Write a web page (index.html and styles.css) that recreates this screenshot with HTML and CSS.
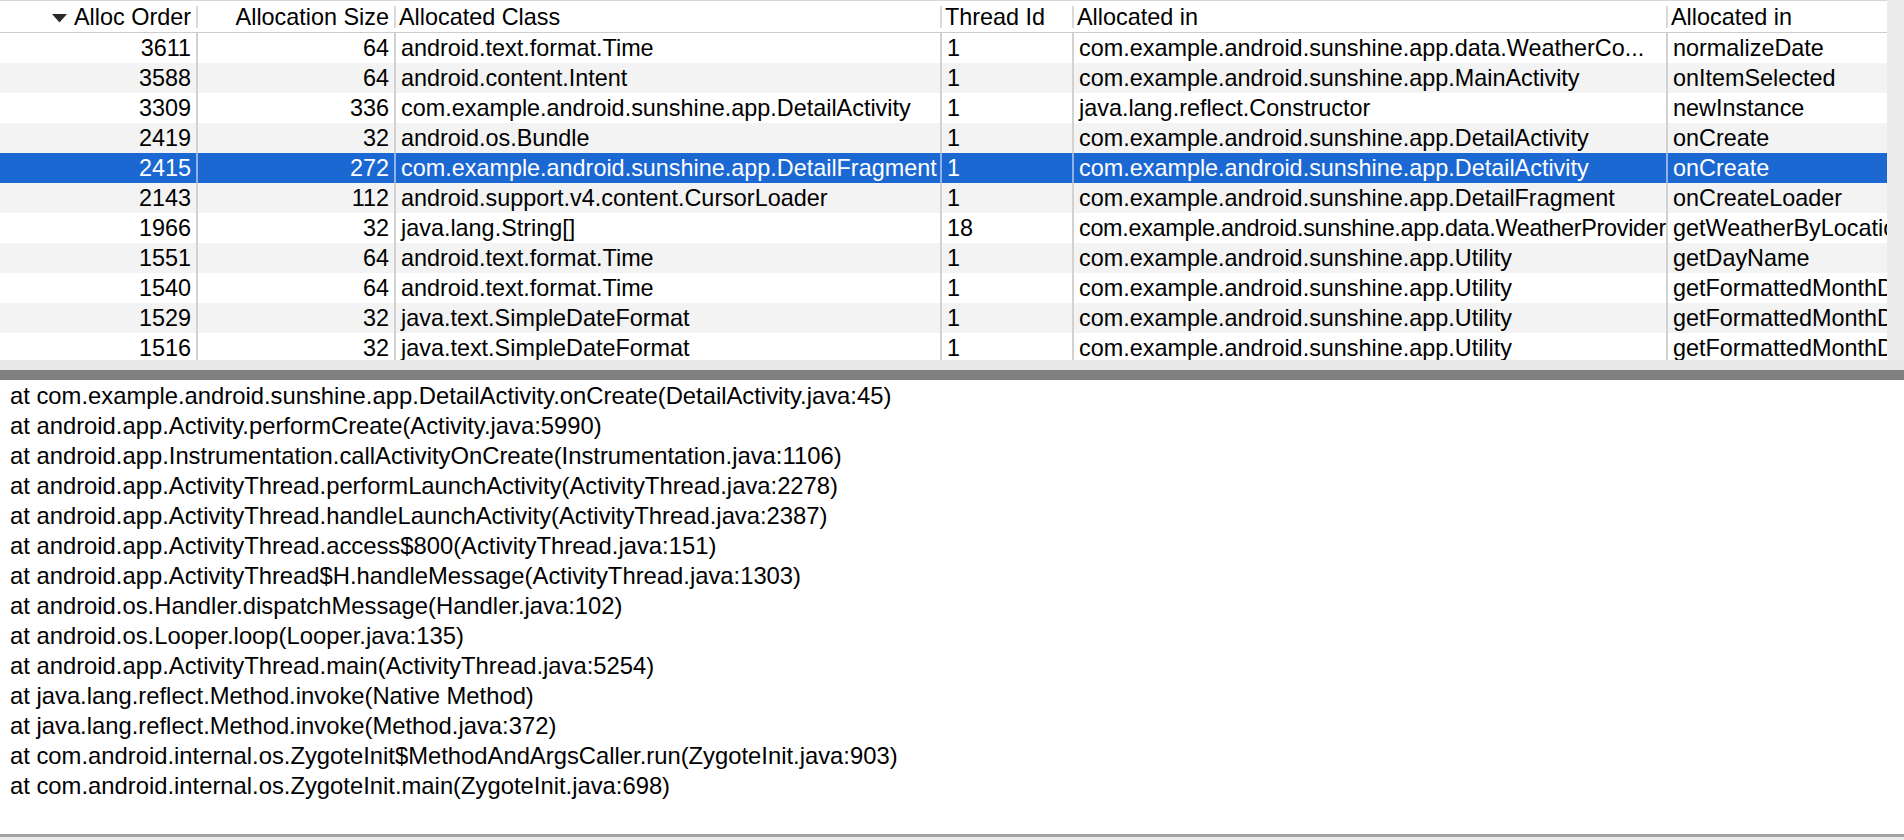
FILE: index.html
```html
<!DOCTYPE html>
<html>
<head>
<meta charset="utf-8">
<title>Allocation Tracker</title>
<link rel="stylesheet" href="styles.css">
</head>
<body>
<div class="app">
  <div class="table-pane">
    <div class="table">
      <div class="hrow">
        <div class="hcell num first"><svg class="sort" width="15" height="9" viewBox="0 0 15 9"><polygon points="0,0 15,0 7.5,8.5" fill="#2a2a2a"/></svg>Alloc Order</div>
        <div class="hcell num">Allocation Size</div>
        <div class="hcell">Allocated Class</div>
        <div class="hcell">Thread Id</div>
        <div class="hcell">Allocated in</div>
        <div class="hcell">Allocated in</div>
      </div>
      <div class="tbody">
        <div class="row"><div class="cell num first">3611</div><div class="cell num">64</div><div class="cell">android.text.format.Time</div><div class="cell">1</div><div class="cell">com.example.android.sunshine.app.data.WeatherCo...</div><div class="cell">normalizeDate</div></div>
        <div class="row alt"><div class="cell num first">3588</div><div class="cell num">64</div><div class="cell">android.content.Intent</div><div class="cell">1</div><div class="cell">com.example.android.sunshine.app.MainActivity</div><div class="cell">onItemSelected</div></div>
        <div class="row"><div class="cell num first">3309</div><div class="cell num">336</div><div class="cell">com.example.android.sunshine.app.DetailActivity</div><div class="cell">1</div><div class="cell">java.lang.reflect.Constructor</div><div class="cell">newInstance</div></div>
        <div class="row alt"><div class="cell num first">2419</div><div class="cell num">32</div><div class="cell">android.os.Bundle</div><div class="cell">1</div><div class="cell">com.example.android.sunshine.app.DetailActivity</div><div class="cell">onCreate</div></div>
        <div class="row selected"><div class="cell num first">2415</div><div class="cell num">272</div><div class="cell">com.example.android.sunshine.app.DetailFragment</div><div class="cell">1</div><div class="cell">com.example.android.sunshine.app.DetailActivity</div><div class="cell">onCreate</div></div>
        <div class="row alt"><div class="cell num first">2143</div><div class="cell num">112</div><div class="cell">android.support.v4.content.CursorLoader</div><div class="cell">1</div><div class="cell">com.example.android.sunshine.app.DetailFragment</div><div class="cell">onCreateLoader</div></div>
        <div class="row"><div class="cell num first">1966</div><div class="cell num">32</div><div class="cell">java.lang.String[]</div><div class="cell">18</div><div class="cell tight">com.example.android.sunshine.app.data.WeatherProvider</div><div class="cell">getWeatherByLocationSettingAndDate</div></div>
        <div class="row alt"><div class="cell num first">1551</div><div class="cell num">64</div><div class="cell">android.text.format.Time</div><div class="cell">1</div><div class="cell">com.example.android.sunshine.app.Utility</div><div class="cell">getDayName</div></div>
        <div class="row"><div class="cell num first">1540</div><div class="cell num">64</div><div class="cell">android.text.format.Time</div><div class="cell">1</div><div class="cell">com.example.android.sunshine.app.Utility</div><div class="cell">getFormattedMonthDay</div></div>
        <div class="row alt"><div class="cell num first">1529</div><div class="cell num">32</div><div class="cell">java.text.SimpleDateFormat</div><div class="cell">1</div><div class="cell">com.example.android.sunshine.app.Utility</div><div class="cell">getFormattedMonthDay</div></div>
        <div class="row"><div class="cell num first">1516</div><div class="cell num">32</div><div class="cell">java.text.SimpleDateFormat</div><div class="cell">1</div><div class="cell">com.example.android.sunshine.app.Utility</div><div class="cell">getFormattedMonthDay</div></div>
      </div>
    </div>
    <div class="gutter"></div>
  </div>
  <div class="splitter">
    <div class="split-light"></div>
    <div class="split-dark"></div>
  </div>
  <div class="trace">
    <div class="line">at com.example.android.sunshine.app.DetailActivity.onCreate(DetailActivity.java:45)</div>
    <div class="line">at android.app.Activity.performCreate(Activity.java:5990)</div>
    <div class="line">at android.app.Instrumentation.callActivityOnCreate(Instrumentation.java:1106)</div>
    <div class="line">at android.app.ActivityThread.performLaunchActivity(ActivityThread.java:2278)</div>
    <div class="line">at android.app.ActivityThread.handleLaunchActivity(ActivityThread.java:2387)</div>
    <div class="line">at android.app.ActivityThread.access$800(ActivityThread.java:151)</div>
    <div class="line">at android.app.ActivityThread$H.handleMessage(ActivityThread.java:1303)</div>
    <div class="line">at android.os.Handler.dispatchMessage(Handler.java:102)</div>
    <div class="line">at android.os.Looper.loop(Looper.java:135)</div>
    <div class="line">at android.app.ActivityThread.main(ActivityThread.java:5254)</div>
    <div class="line">at java.lang.reflect.Method.invoke(Native Method)</div>
    <div class="line">at java.lang.reflect.Method.invoke(Method.java:372)</div>
    <div class="line">at com.android.internal.os.ZygoteInit$MethodAndArgsCaller.run(ZygoteInit.java:903)</div>
    <div class="line">at com.android.internal.os.ZygoteInit.main(ZygoteInit.java:698)</div>
  </div>
  <div class="bottom-bar"></div>
</div>
</body>
</html>
```

FILE: styles.css
```css
html, body {
  margin: 0;
  padding: 0;
  overflow: hidden;
  background: #ffffff;
}

.app {
  width: 1904px;
  height: 840px;
  display: flex;
  flex-direction: column;
  font-family: "Liberation Sans", Arial, Helvetica, sans-serif;
  font-size: 23.4px;
  color: #000;
}

.table-pane {
  height: 360px;
  display: flex;
  flex-direction: row;
  flex: 0 0 auto;
}

.table {
  width: 1887px;
  display: flex;
  flex-direction: column;
  background: #fff;
}

.gutter {
  flex: 1 1 auto;
  background: #ececec;
}

.hrow,
.row {
  display: grid;
  grid-template-columns: 196px 198px 546px 132px 594px 221px;
}

.hrow {
  height: 30px;
  border-top: 1px solid #d7d7d7;
  padding-top: 1px;
  border-bottom: 1px solid #cdcdcd;
  background: #fff;
}

.hcell {
  line-height: 30px;
  white-space: nowrap;
  overflow: hidden;
  padding-left: 5px;
  background: linear-gradient(#dadada, #dadada) left 4px / 2px 22px no-repeat;
}

.hcell.first {
  background: none;
}

.hcell.num,
.cell.num {
  text-align: right;
  padding-left: 0;
  padding-right: 5px;
}

.sort {
  margin-right: 7px;
  vertical-align: 2px;
}

.tbody {
  height: 327px;
  overflow: hidden;
}

.row {
  height: 30px;
  background: #ffffff;
}

.row.alt {
  background: #f3f3f3;
}

.row.selected {
  background: #1b68d3;
  color: #ffffff;
}

.cell {
  line-height: 30px;
  white-space: nowrap;
  overflow: hidden;
  text-overflow: clip;
  padding-left: 5px;
  padding-right: 0;
  border-left: 2px solid #d2d2d2;
}

.cell.first {
  border-left: 0;
}

.cell.tight {
  letter-spacing: -0.3px;
}

.row.selected .cell {
  border-left-color: #8fb3e8;
}

.row.selected .cell.first {
  border-left: 0;
}

.splitter {
  flex: 0 0 auto;
  display: flex;
  flex-direction: column;
}

.split-light {
  height: 10px;
  background: #e8e8e8;
}

.split-dark {
  height: 10px;
  background: #808080;
}

.trace {
  flex: 1 1 auto;
  padding-top: 1px;
  padding-left: 10px;
  background: #fff;
  font-size: 23.8px;
}

.line {
  line-height: 30px;
  height: 30px;
  white-space: nowrap;
}

.bottom-bar {
  flex: 0 0 auto;
  height: 3px;
  border-top: 3px solid #a3a3a3;
  background: #ebebeb;
}
```
